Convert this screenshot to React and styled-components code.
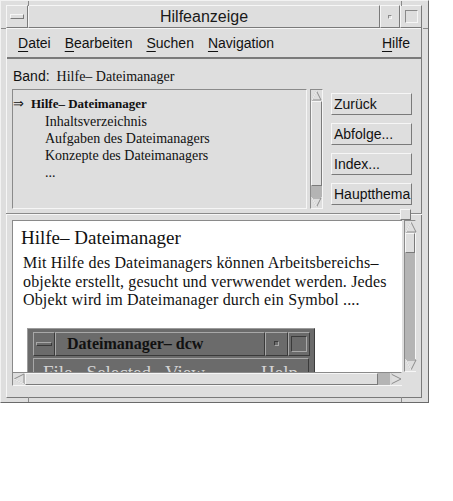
import React from 'react'
import styled, { createGlobalStyle } from 'styled-components'

const GlobalStyle = createGlobalStyle`
  html, body {
    margin: 0;
    background: #ffffff;
  }
  body {
    font-family: "Liberation Sans", Arial, sans-serif;
    color: #111;
  }
`

const bevelOut = `
  border: 1px solid;
  border-color: #f6f6f6 #7a7a7a #7a7a7a #f6f6f6;
`
const bevelIn = `
  border: 1px solid;
  border-color: #8a8a8a #f6f6f6 #f6f6f6 #8a8a8a;
`

function Arrow({ dir, size = 11 }) {
  const s = size
  const pts = {
    up: [[s / 2, 1], [s - 1, s - 1], [1, s - 1]],
    down: [[1, 1], [s - 1, 1], [s / 2, s - 1]],
    left: [[1, s / 2], [s - 1, 1], [s - 1, s - 1]],
    right: [[1, 1], [s - 1, s / 2], [1, s - 1]],
  }[dir]
  const p = pts.map((q) => q.join(',')).join(' ')
  return (
    <svg width={s} height={s} viewBox={`0 0 ${s} ${s}`}>
      <polygon points={p} fill="#dedede" stroke="#8c8c8c" strokeWidth="1" />
      <polyline points={`${pts[0].join(',')} ${pts[2].join(',')}`} fill="none" stroke="#ffffff" strokeWidth="1" />
    </svg>
  )
}

function ScrollBar({ vertical, size, slider, trough }) {
  return (
    <Scroll $vertical={vertical}>
      <ArrowBox $size={size}><Arrow dir={vertical ? 'up' : 'left'} size={size} /></ArrowBox>
      <Slider $vertical={vertical} $len={slider} />
      <Trough $len={trough} />
      <ArrowBox $size={size}><Arrow dir={vertical ? 'down' : 'right'} size={size} /></ArrowBox>
    </Scroll>
  )
}

function Mnemonic({ first, rest }) {
  return (
    <MenuItem>
      <u>{first}</u>{rest}
    </MenuItem>
  )
}

export default function App() {
  return (
    <>
      <GlobalStyle />
      <Window>
        <Notch style={{ left: 27, top: 0 }} $v />
        <Notch style={{ left: 400, top: 0 }} $v />
        <Notch style={{ left: 27, bottom: 0 }} $v />
        <Notch style={{ left: 400, bottom: 0 }} $v />
        <Notch style={{ left: 0, top: 27 }} />
        <Notch style={{ right: 0, top: 27 }} />

        <TitleBar>
          <TitleCell $w="22px">
            <WinMenuIcon />
          </TitleCell>
          <TitleCell $grow>Hilfeanzeige</TitleCell>
          <TitleCell $w="20px">
            <MinIcon />
          </TitleCell>
          <TitleCell $w="22px">
            <MaxIcon />
          </TitleCell>
        </TitleBar>

        <Client>
          <MenuBar>
            <Mnemonic first="D" rest="atei" />
            <Mnemonic first="B" rest="earbeiten" />
            <Mnemonic first="S" rest="uchen" />
            <Mnemonic first="N" rest="avigation" />
            <Spacer />
            <Mnemonic first="H" rest="ilfe" />
          </MenuBar>

          <Body>
            <BandRow>
              <BandLabel>Band:</BandLabel>
              <BandValue>Hilfe– Dateimanager</BandValue>
            </BandRow>

            <TopPane>
              <TopicList>
                <TopicItem $current>
                  <CurrentMark>⇒</CurrentMark>
                  Hilfe– Dateimanager
                </TopicItem>
                <TopicItem>Inhaltsverzeichnis</TopicItem>
                <TopicItem>Aufgaben des Dateimanagers</TopicItem>
                <TopicItem>Konzepte des Dateimanagers</TopicItem>
                <TopicItem>...</TopicItem>
              </TopicList>
              <ListScroll>
                <ScrollBar vertical size={11} slider={85} trough={11} />
              </ListScroll>
              <ButtonColumn>
                <PushButton>Zurück</PushButton>
                <PushButton>Abfolge...</PushButton>
                <PushButton>Index...</PushButton>
                <PushButton>Hauptthema</PushButton>
              </ButtonColumn>
            </TopPane>

            <Sash>
              <SashHandle />
            </Sash>

            <BottomPane>
              <HelpText>
                <Heading>Hilfe– Dateimanager</Heading>
                <Para>
                  Mit Hilfe des Dateimanagers können Arbeitsbereichs–<br />
                  objekte erstellt, gesucht und verwwendet werden. Jedes<br />
                  Objekt wird im Dateimanager durch ein Symbol ....
                </Para>
                <Shot>
                  <ShotTitle>
                    <ShotCell $w="22px"><ShotDash /></ShotCell>
                    <ShotCell $grow>Dateimanager– dcw</ShotCell>
                    <ShotCell $w="23px"><ShotDot /></ShotCell>
                    <ShotCell $w="22px"><ShotBox /></ShotCell>
                  </ShotTitle>
                  <ShotMenu>
                    <span>File</span>
                    <span>Selected</span>
                    <span>View</span>
                    <ShotHelp>Help</ShotHelp>
                  </ShotMenu>
                </Shot>
              </HelpText>
              <ScrollBar vertical size={12} slider={20} />
              <ScrollBar size={12} slider={353} trough={12} />
            </BottomPane>
          </Body>
        </Client>
      </Window>
    </>
  )
}

const Window = styled.div`
  position: relative;
  width: 429px;
  height: 403px;
  box-sizing: border-box;
  background: #dedede;
  border: 1px solid;
  border-color: #f2f2f2 #6a6a6a #6a6a6a #f2f2f2;
  padding: 4px 6px 4px 5px;
  display: flex;
  flex-direction: column;
`

const Notch = styled.span`
  position: absolute;
  background: #8a8a8a;
  width: ${(p) => (p.$v ? '1px' : '5px')};
  height: ${(p) => (p.$v ? '5px' : '1px')};
`

const TitleBar = styled.div`
  display: flex;
  height: 23px;
  flex-shrink: 0;
`

const TitleCell = styled.div`
  ${bevelOut}
  box-sizing: border-box;
  width: ${(p) => p.$w || 'auto'};
  flex: ${(p) => (p.$grow ? 1 : 'none')};
  display: flex;
  align-items: center;
  justify-content: center;
  font-size: 16px;
  color: #1a1a1a;
`

const WinMenuIcon = styled.span`
  width: 12px;
  height: 3px;
  ${bevelOut}
`

const MinIcon = styled.span`
  width: 2px;
  height: 2px;
  ${bevelIn}
`

const MaxIcon = styled.span`
  width: 11px;
  height: 11px;
  ${bevelIn}
`

const Client = styled.div`
  flex: 1;
  display: flex;
  flex-direction: column;
  border: 1px solid;
  border-color: #f6f6f6 #7a7a7a #7a7a7a #f6f6f6;
  border-top: none;
`

const MenuBar = styled.div`
  height: 31px;
  box-sizing: border-box;
  display: flex;
  align-items: center;
  gap: 14px;
  padding: 0 11px 0 11px;
  border-bottom: 2px solid #7a7a7a;
  border-top: 1px solid #f6f6f6;
  font-size: 14px;

  u {
    text-decoration: underline;
    text-underline-offset: 3px;
    text-decoration-thickness: 1px;
  }
`

const MenuItem = styled.span`
  color: #111;
`

const Spacer = styled.span`
  flex: 1;
`

const Body = styled.div`
  flex: 1;
  display: flex;
  flex-direction: column;
  padding: 0 5px 0 5px;
`

const BandRow = styled.div`
  display: flex;
  align-items: baseline;
  gap: 7px;
  height: 16px;
  margin-top: 9px;
  padding-left: 1px;
`

const BandLabel = styled.span`
  font-size: 14px;
`

const BandValue = styled.span`
  font-family: "Liberation Serif", "Times New Roman", serif;
  font-size: 14px;
`

const TopPane = styled.div`
  display: flex;
  height: 120px;
  margin-top: 5px;
`

const TopicList = styled.div`
  ${bevelIn}
  width: 295px;
  box-sizing: border-box;
  padding-top: 4px;
  font-family: "Liberation Serif", "Times New Roman", serif;
`

const TopicItem = styled.div`
  height: ${(p) => (p.$current ? '19px' : '17px')};
  line-height: ${(p) => (p.$current ? '19px' : '17px')};
  font-size: ${(p) => (p.$current ? '13px' : '14px')};
  font-weight: ${(p) => (p.$current ? 'bold' : 'normal')};
  padding-left: ${(p) => (p.$current ? '0' : '32px')};
  white-space: nowrap;
`

const CurrentMark = styled.span`
  display: inline-block;
  width: 18px;
  font-family: "DejaVu Sans", sans-serif;
  font-weight: normal;
  font-size: 13px;
`

const ListScroll = styled.div`
  margin-left: 3px;
  width: 13px;
  display: flex;
`

const Scroll = styled.div`
  ${bevelIn}
  box-sizing: border-box;
  display: flex;
  flex-direction: ${(p) => (p.$vertical ? 'column' : 'row')};
  background: #b4b4b4;
  flex: 1;
`

const ArrowBox = styled.div`
  width: ${(p) => p.$size}px;
  height: ${(p) => p.$size}px;
  flex: none;
  display: flex;
  background: #dedede;

  svg {
    display: block;
  }
`

const Slider = styled.div`
  flex: none;
  ${(p) => (p.$vertical ? `height: ${p.$len}px;` : `width: ${p.$len}px;`)}
  background: #dedede;
  ${bevelOut}
  box-sizing: border-box;
`

const Trough = styled.div`
  ${(p) => (p.$len ? `flex: none; flex-basis: ${p.$len}px;` : 'flex: 1;')}
  background: #b4b4b4;
`

const ButtonColumn = styled.div`
  margin-left: 8px;
  width: 81px;
  padding-top: 4px;
  display: flex;
  flex-direction: column;
  gap: 8px;
`

const PushButton = styled.button`
  ${bevelOut}
  height: 22px;
  box-sizing: border-box;
  background: #dedede;
  font-family: "Liberation Sans", Arial, sans-serif;
  font-size: 14px;
  color: #111;
  text-align: left;
  padding: 0 0 0 2px;
  margin: 0;
`

const Sash = styled.div`
  position: relative;
  height: 11px;
  margin: 0 -6px 0 -6px;
  flex-shrink: 0;

  &::before {
    content: '';
    position: absolute;
    left: 0;
    right: 0;
    top: 4px;
    height: 1px;
    background: #8a8a8a;
    border-bottom: 1px solid #f6f6f6;
  }
`

const SashHandle = styled.span`
  position: absolute;
  right: 11px;
  top: 0;
  width: 9px;
  height: 9px;
  background: #dedede;
  ${bevelOut}
`

const BottomPane = styled.div`
  display: grid;
  grid-template-columns: 390px 12px;
  grid-template-rows: 152px 14px;
  column-gap: 2px;
  row-gap: 0;
`

const HelpText = styled.div`
  background: #ffffff;
  border-top: 1px solid #8a8a8a;
  border-left: 1px solid #8a8a8a;
  overflow: hidden;
  padding: 6px 0 0 8px;
  font-family: "Liberation Serif", "Times New Roman", serif;
  color: #111;
`

const Heading = styled.h1`
  margin: 0;
  font-size: 19px;
  font-weight: normal;
  line-height: 22px;
`

const Para = styled.p`
  margin: 5px 0 0 2px;
  font-size: 16px;
  line-height: 18.5px;
  letter-spacing: 0.15px;
  white-space: nowrap;
`

const Shot = styled.div`
  margin: 18px 0 0 6px;
  width: 288px;
  height: 70px;
  box-sizing: border-box;
  background: #6b6b6b;
  border: 1px solid;
  border-color: #9c9c9c #3c3c3c #3c3c3c #9c9c9c;
  padding: 3px 4px 0 5px;
`

const ShotTitle = styled.div`
  display: flex;
  height: 24px;
`

const ShotCell = styled.div`
  box-sizing: border-box;
  border: 1px solid;
  border-color: #a8a8a8 #3a3a3a #3a3a3a #a8a8a8;
  width: ${(p) => p.$w || 'auto'};
  flex: ${(p) => (p.$grow ? 1 : 'none')};
  display: flex;
  align-items: center;
  padding-left: ${(p) => (p.$grow ? '11px' : '0')};
  justify-content: ${(p) => (p.$grow ? 'flex-start' : 'center')};
  font-weight: bold;
  font-size: 16px;
  color: #111;
`

const ShotDash = styled.span`
  width: 14px;
  height: 2px;
  border: 1px solid;
  border-color: #a8a8a8 #3a3a3a #3a3a3a #a8a8a8;
`

const ShotDot = styled.span`
  width: 3px;
  height: 3px;
  border: 1px solid;
  border-color: #3a3a3a #a8a8a8 #a8a8a8 #3a3a3a;
`

const ShotBox = styled.span`
  width: 14px;
  height: 14px;
  border: 1px solid;
  border-color: #3a3a3a #a8a8a8 #a8a8a8 #3a3a3a;
`

const ShotMenu = styled.div`
  margin-top: 2px;
  margin-right: 1px;
  height: 30px;
  border: 1px solid;
  border-color: #a8a8a8 #3a3a3a #3a3a3a #a8a8a8;
  display: flex;
  gap: 14px;
  padding: 3px 0 0 9px;
  font-size: 19px;
  color: #d4d4d4;
`

const ShotHelp = styled.span`
  margin-left: auto;
  margin-right: 10px;
`
